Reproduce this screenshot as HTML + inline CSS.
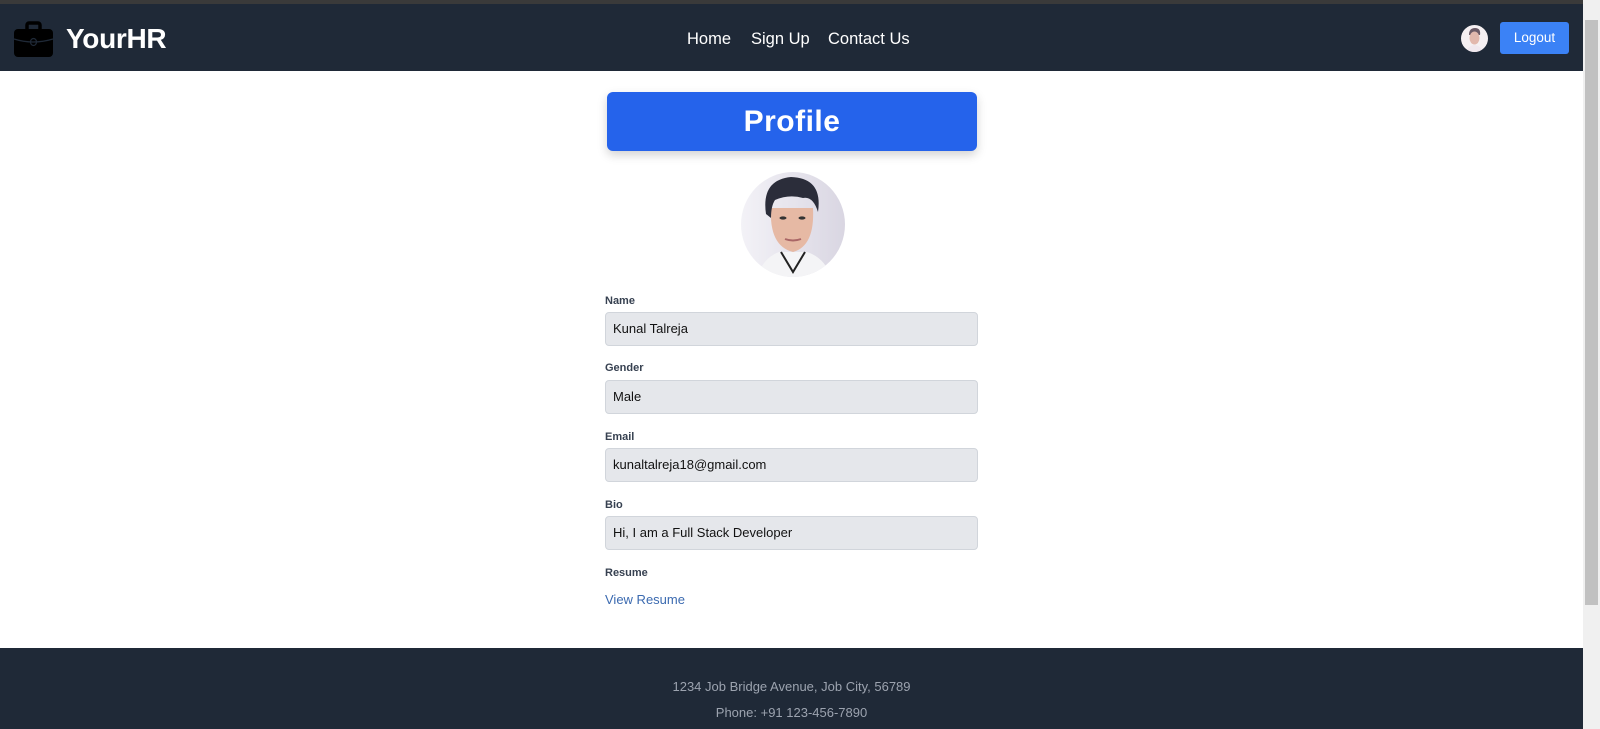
<!DOCTYPE html>
<html><head><meta charset="utf-8"><style>
*{margin:0;padding:0;box-sizing:border-box}
body{width:1600px;height:729px;overflow:hidden;background:#fff;font-family:"Liberation Sans",sans-serif;position:relative}
.abs{position:absolute}
.top{left:0;top:0;width:1583px;height:4px;background:#3a3a3a}
.nav{left:0;top:4px;width:1583px;height:67px;background:#1f2937}
.brand{left:66px;top:23px;color:#fff;font-size:28px;font-weight:bold;letter-spacing:-0.3px}
.link{top:30px;color:#fff;font-size:16.5px}
.logout{left:1500px;top:22px;width:69px;height:32px;background:#3b82f6;border-radius:3px;color:#fff;font-size:13.5px;text-align:center;line-height:32px}
.sav{left:1461px;top:25px;width:27px;height:27px;border-radius:50%;overflow:hidden;background:#f5f0f2}
.prof{left:607px;top:92px;width:370px;height:59px;background:#2563eb;border-radius:6px;box-shadow:0 4px 10px rgba(0,0,0,.18);color:#fff;font-size:30px;font-weight:900;text-align:center;line-height:59px;letter-spacing:.5px}
.av{left:741px;top:172px;width:104px;height:105px;border-radius:50%;overflow:hidden;background:linear-gradient(90deg,#f3f2f7,#d9d6e2)}
.lab{left:605px;font-size:11px;font-weight:bold;color:#374151}
.inp{left:605px;width:373px;height:34px;background:#e5e7eb;border:1px solid #d1d5db;border-radius:4px;font-size:13px;color:#111;padding-left:7px;line-height:32px}
.vr{left:605px;top:592px;font-size:13px;color:#3b6ab0}
.foot{left:0;top:648px;width:1583px;height:81px;background:#1f2937}
.ft{width:1583px;left:0;text-align:center;color:#9ca3af;font-size:13px}
.sb{left:1583px;top:0;width:17px;height:729px;background:#f0f0f0}
.th{left:1585px;top:20px;width:13px;height:585px;background:#c1c1c1}
</style></head><body>
<div class="abs top"></div>
<div class="abs nav"></div>
<svg class="abs" style="left:13px;top:21px" width="41" height="37" viewBox="0 0 41 37"><path d="M14 8V4a2 2 0 0 1 2-2h9a2 2 0 0 1 2 2v4" stroke="#000" stroke-width="3.5" fill="none"/><rect x="1" y="8" width="39" height="28" rx="4" fill="#000"/><path d="M1 18 Q20 24 40 18" stroke="#1f2937" stroke-width="1.2" fill="none"/><ellipse cx="20.5" cy="21" rx="3" ry="3.5" fill="none" stroke="#1f2937" stroke-width="1.2"/></svg>
<div class="abs brand">YourHR</div>
<div class="abs link" style="left:687px">Home</div>
<div class="abs link" style="left:751px">Sign Up</div>
<div class="abs link" style="left:828px">Contact Us</div>
<div class="abs sav"><svg width="27" height="27" viewBox="0 0 27 27"><path d="M8 10 Q8 3 14 3 Q20 3 19 10Z" fill="#6b5a66"/><ellipse cx="13.5" cy="13" rx="5" ry="6.5" fill="#e2b8ad"/><path d="M5 27 Q8 20 13.5 20 Q19 20 22 27Z" fill="#f0e8ee"/></svg></div>
<div class="abs logout">Logout</div>
<div class="abs prof">Profile</div>
<div class="abs av">
<svg width="104" height="105" viewBox="0 0 104 105">
<path d="M16 105 Q22 86 38 80 L66 80 Q84 86 90 105Z" fill="#f4f4f6"/>
<path d="M40 80 L52 100 L64 80" stroke="#222" stroke-width="2" fill="none"/>
<path d="M30 36 Q28 74 52 80 Q74 74 72 36Z" fill="#e6b9a4"/>
<path d="M25 42 Q20 8 50 5 Q82 6 77 40 Q72 24 62 26 Q48 22 34 28 Q30 34 30 46Z" fill="#2b2d3a"/>
<ellipse cx="42" cy="46" rx="3.5" ry="1.6" fill="#333"/><ellipse cx="61" cy="46" rx="3.5" ry="1.6" fill="#333"/>
<path d="M44 67 Q52 70 60 67" stroke="#a66" stroke-width="2" fill="none"/>
</svg></div>
<div class="abs lab" style="top:295px">Name</div>
<div class="abs inp" style="top:312px">Kunal Talreja</div>
<div class="abs lab" style="top:362px">Gender</div>
<div class="abs inp" style="top:380px">Male</div>
<div class="abs lab" style="top:431px">Email</div>
<div class="abs inp" style="top:448px">kunaltalreja18@gmail.com</div>
<div class="abs lab" style="top:499px">Bio</div>
<div class="abs inp" style="top:516px">Hi, I am a Full Stack Developer</div>
<div class="abs lab" style="top:567px">Resume</div>
<div class="abs vr">View Resume</div>
<div class="abs foot"></div>
<div class="abs ft" style="top:679px">1234 Job Bridge Avenue, Job City, 56789</div>
<div class="abs ft" style="top:705px">Phone: +91 123-456-7890</div>
<div class="abs sb"></div>
<div class="abs th"></div>
</body></html>
